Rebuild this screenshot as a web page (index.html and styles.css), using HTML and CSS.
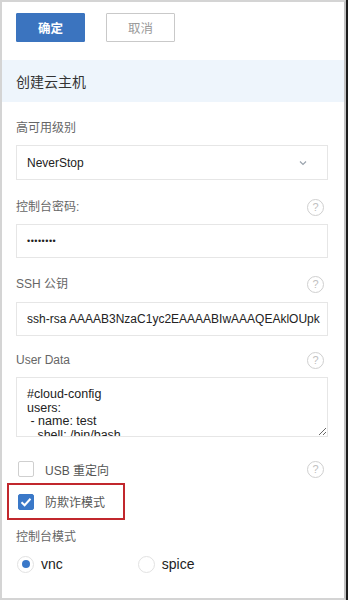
FILE: index.html
```html
<!DOCTYPE html>
<html lang="zh-CN">
<head>
<meta charset="utf-8">
<title>创建云主机</title>
<link rel="stylesheet" href="styles.css">
</head>
<body>
<div class="window">
  <div class="frame">
    <div class="actions">
      <button class="btn btn-primary">确定</button>
      <button class="btn btn-default">取消</button>
    </div>
    <div class="band">创建云主机</div>
    <div class="form">
      <div class="label l1">高可用级别</div>
      <div class="select">
        <span>NeverStop</span>
        <svg class="chev" width="8" height="6" viewBox="0 0 8 6"><polyline points="1,1.5 4,4.5 7,1.5" fill="none" stroke="#9aa3ad" stroke-width="1.2"/></svg>
      </div>

      <div class="label l2"><span>控制台密码:</span><span class="help">?</span></div>
      <div class="input pw">••••••••</div>

      <div class="label l3"><span>SSH 公钥</span><span class="help">?</span></div>
      <div class="input ssh">ssh-rsa AAAAB3NzaC1yc2EAAAABIwAAAQEAklOUpk</div>

      <div class="label l4"><span>User Data</span><span class="help">?</span></div>
      <textarea class="textarea" readonly>#cloud-config
users:
 - name: test
   shell: /bin/bash
   groups: users</textarea>

      <div class="check-row usb">
        <span class="box"></span>
        <span class="check-text">USB 重定向</span>
        <span class="help">?</span>
      </div>

      <div class="check-row fraud">
        <span class="box checked">
          <svg width="16" height="16" viewBox="0 0 16 16"><polyline points="3.5,8.2 6.6,11.2 12.5,4.8" fill="none" stroke="#fff" stroke-width="2"/></svg>
        </span>
        <span class="check-text">防欺诈模式</span>
      </div>

      <div class="label l5">控制台模式</div>
      <div class="radios">
        <span class="radio on"><span class="dot"></span></span>
        <span class="radio-text">vnc</span>
        <span class="radio spice"></span>
        <span class="radio-text">spice</span>
      </div>
    </div>
  </div>
</div>
</body>
</html>
```

FILE: styles.css
```css
html, body {
  margin: 0;
  padding: 0;
  background: #fff;
}
body {
  font-family: "Liberation Sans", "Noto Sans CJK SC", sans-serif;
  color: #333;
}
.window {
  width: 348px;
  height: 600px;
  box-sizing: border-box;
  border-right: 2px solid #1c1c1c;
  overflow: hidden;
}
.frame {
  height: 600px;
  box-sizing: border-box;
  border: 2px solid #d4d4d4;
  border-right-color: #c2c2c2;
  background: #fff;
}
.actions {
  display: flex;
  gap: 21px;
  padding: 11px 14px 0;
}
.btn {
  width: 69px;
  height: 29px;
  box-sizing: border-box;
  font-family: "Liberation Sans", "Noto Sans CJK SC", sans-serif;
  font-size: 12.5px;
  padding: 0;
  border-radius: 1px;
}
.btn-primary {
  background: #3b74bf;
  border: 1px solid #3b74bf;
  color: #fff;
  font-weight: bold;
}
.btn-default {
  background: #fff;
  border: 1px solid #c9c9c9;
  color: #9a9a9a;
}
.band {
  margin-top: 18px;
  height: 42px;
  display: flex;
  align-items: center;
  padding-left: 14px;
  background: #eef5fc;
  font-size: 14px;
  color: #333;
}
.form {
  padding: 17px 16px 0 14px;
}
.label {
  height: 18px;
  line-height: 18px;
  font-size: 12px;
  color: #666;
  display: flex;
  justify-content: space-between;
  align-items: center;
  padding-right: 4px;
}
.l2 { margin-top: 18px; }
.l3 { margin-top: 17px; }
.l4 { margin-top: 15px; }
.l5 { margin-top: 8px; }
.help {
  width: 17px;
  height: 17px;
  box-sizing: border-box;
  border: 1px solid #cfcfcf;
  border-radius: 50%;
  color: #c0c0c0;
  font-size: 11px;
  line-height: 15px;
  text-align: center;
}
.select {
  margin-top: 8px;
  height: 35px;
  box-sizing: border-box;
  border: 1px solid #e6e6e6;
  display: flex;
  align-items: center;
  justify-content: space-between;
  padding: 0 20px 0 10px;
  font-size: 12px;
  color: #222;
}
.input {
  margin-top: 8px;
  height: 34px;
  box-sizing: border-box;
  border: 1px solid #e6e6e6;
  display: flex;
  align-items: center;
  padding: 0 10px;
  font-size: 12px;
  color: #222;
  white-space: nowrap;
  overflow: hidden;
}
.pw {
  font-size: 9px;
  letter-spacing: 0.5px;
}
.ssh { margin-top: 9px; }
.textarea {
  display: block;
  margin-top: 8px;
  width: 100%;
  height: 60px;
  box-sizing: border-box;
  border: 1px solid #e6e6e6;
  padding: 10px 10px 0;
  font-family: "Liberation Sans", "Noto Sans CJK SC", sans-serif;
  font-size: 12.5px;
  line-height: 13.5px;
  color: #222;
  resize: both;
  overflow: hidden;
  outline: none;
  border-radius: 0;
}
.check-row {
  display: flex;
  align-items: center;
  font-size: 12px;
  color: #555;
}
.usb {
  margin-top: 23px;
  height: 18px;
  padding-left: 2px;
  padding-right: 4px;
}
.usb .help { margin-left: auto; }
.box {
  width: 16px;
  height: 16px;
  box-sizing: border-box;
  border: 1px solid #cfcfcf;
  border-radius: 2px;
  background: #fff;
  display: block;
}
.box.checked {
  background: #3a78c8;
  border-color: #3a78c8;
}
.box.checked svg {
  display: block;
  margin: -1px;
}
.check-text {
  margin-left: 11px;
}
.fraud {
  margin-top: 5px;
  margin-left: -9px;
  width: 118px;
  height: 37px;
  box-sizing: border-box;
  border: 2px solid #c1272d;
  padding-left: 9px;
}
.radios {
  margin-top: 9px;
  height: 18px;
  display: flex;
  align-items: center;
  padding-left: 1px;
}
.radio {
  width: 17px;
  height: 17px;
  box-sizing: border-box;
  border: 1px solid #e2e2e2;
  border-radius: 50%;
  display: flex;
  align-items: center;
  justify-content: center;
  background: #fff;
}
.dot {
  width: 8px;
  height: 8px;
  border-radius: 50%;
  background: #3a78c8;
}
.radio-text {
  margin-left: 7px;
  font-size: 14px;
  color: #222;
}
.radio.spice {
  margin-left: 75px;
}
```
